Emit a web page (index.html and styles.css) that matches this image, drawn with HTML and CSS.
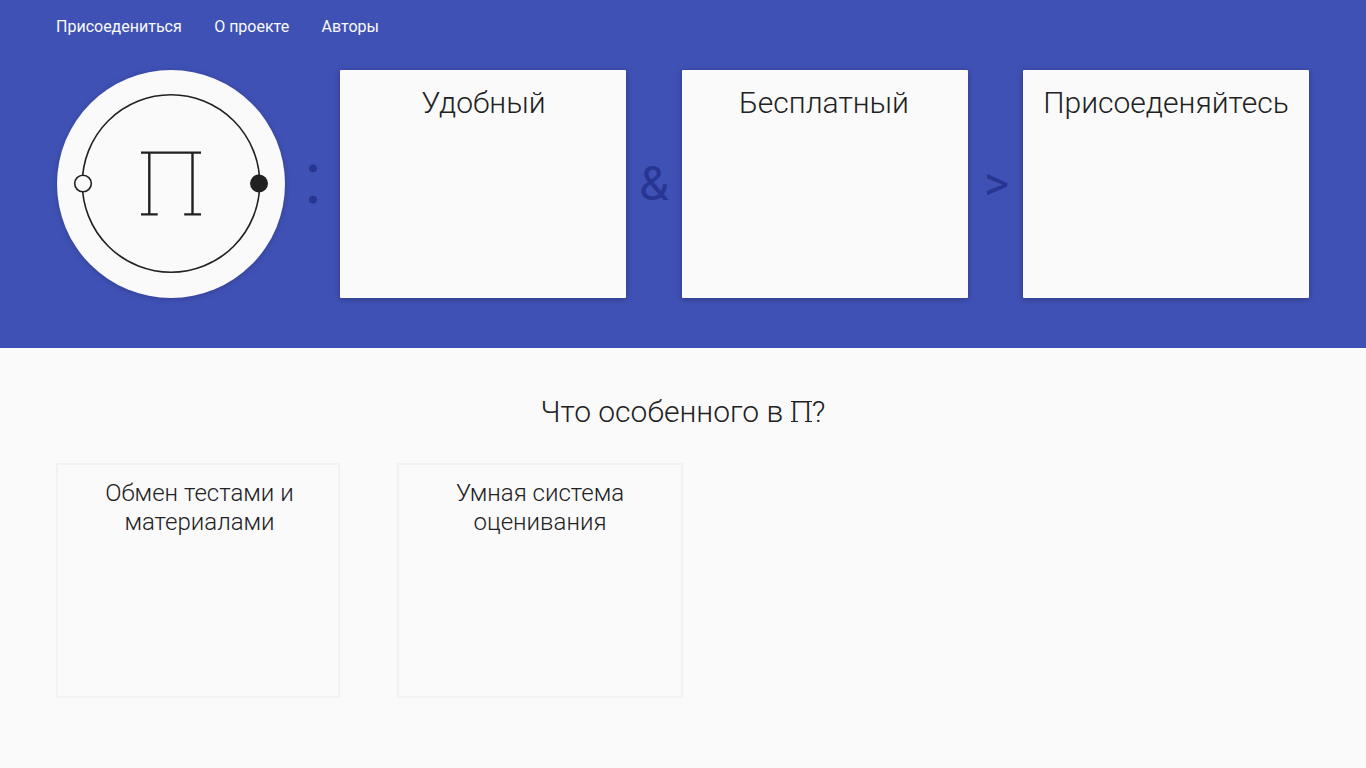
FILE: index.html
```html
<!DOCTYPE html>
<html lang="ru">
<head>
<meta charset="utf-8">
<title>П</title>
<link rel="stylesheet" href="styles.css">
</head>
<body>
<header class="hero">
  <nav class="nav">
    <a>Присоедениться</a>
    <a>О проекте</a>
    <a>Авторы</a>
  </nav>
  <div class="formula">
    <div class="logo">
      <svg width="228" height="228" viewBox="0 0 228 228" fill="none" stroke="#212121">
        <circle cx="114" cy="113.5" r="88.7" stroke-width="1.6"/>
        <circle cx="26" cy="113.5" r="8.3" fill="#fafafa" stroke-width="1.6"/>
        <circle cx="202" cy="113.5" r="9" fill="#212121" stroke="none"/>
        <path stroke-width="2.4" d="M84 82.6h60M92.3 82.6v62M135.5 82.6v62M84 144.4h16.7M127.2 144.4H144"/>
      </svg>
    </div>
    <span class="op op-colon">:</span>
    <article class="card card-first"><h2>Удобный</h2></article>
    <span class="op">&amp;</span>
    <article class="card card-second"><h2>Бесплатный</h2></article>
    <span class="op op-more">&gt;</span>
    <article class="card"><h2>Присоеденяйтесь</h2></article>
  </div>
</header>
<main class="features">
  <h1>Что особенного в <span class="slab">П</span>?</h1>
  <div class="feature-list">
    <article class="feature"><h3>Обмен тестами и материалами</h3></article>
    <article class="feature feature-wide"><h3>Умная система оценивания</h3></article>
  </div>
</main>
</body>
</html>
```
FILE: styles.css
```css
* { box-sizing: border-box; }
body {
  margin: 0;
  min-height: 768px;
  background: #fafafa;
  color: #212121;
  font-family: Roboto, sans-serif;
}
h1, h2, h3 { margin: 0; font-weight: 300; text-align: center; }
.hero { height: 348px; background: #3f51b5; }
.nav {
  display: flex;
  gap: 32.4px;
  height: 70px;
  padding: 17px 0 0 56px;
  color: #fafafa;
  font-size: 16px;
  line-height: 19px;
}
.formula {
  display: grid;
  grid-template-columns: 228px 55px 286px 56px 286px 55px 286px;
  height: 228px;
  margin-left: 57px;
}
.logo, .card {
  background: #fafafa;
  box-shadow: 0 1px 6px rgba(0, 0, 0, .3);
}
.logo { border-radius: 50%; box-shadow: 0 1px 6px rgba(0, 0, 0, .2); }
.logo svg { display: block; }
.card { padding-top: 15px; border-radius: 1px; }
.card-first { padding-left: 1px; }
.card-second { padding-right: 2px; }
.card h2 { font-size: 30px; line-height: 36px; }
.op {
  display: flex;
  align-items: center;
  justify-content: center;
  color: #283593;
  font-size: 48px;
  line-height: 56px;
}
.op-colon { padding: 0 0 10px 1px; font-size: 72px; }
.op-more { padding-left: 2px; }
.features { padding-top: 46px; }
.features h1 { font-size: 30px; line-height: 36px; }
.slab { position: relative; }
.slab::before, .slab::after {
  content: "";
  position: absolute;
  height: 1px;
  background: #212121;
}
.slab::before { top: 7px; left: 0; right: 0; }
.slab::after {
  bottom: 7px;
  left: 0;
  right: 0;
  background: linear-gradient(90deg, #212121 7px, transparent 7px calc(100% - 7px), #212121 calc(100% - 7px));
}
.feature-list { display: flex; gap: 57px; margin: 33px 0 0 56px; }
.feature {
  width: 284px;
  height: 235px;
  padding: 14px 30px 14px 33px;
  border: 2px solid #f2f2f2;
}
.feature-wide { width: 286px; padding: 14px 32px; }
.feature h3 { font-size: 24px; line-height: 29px; }
```
